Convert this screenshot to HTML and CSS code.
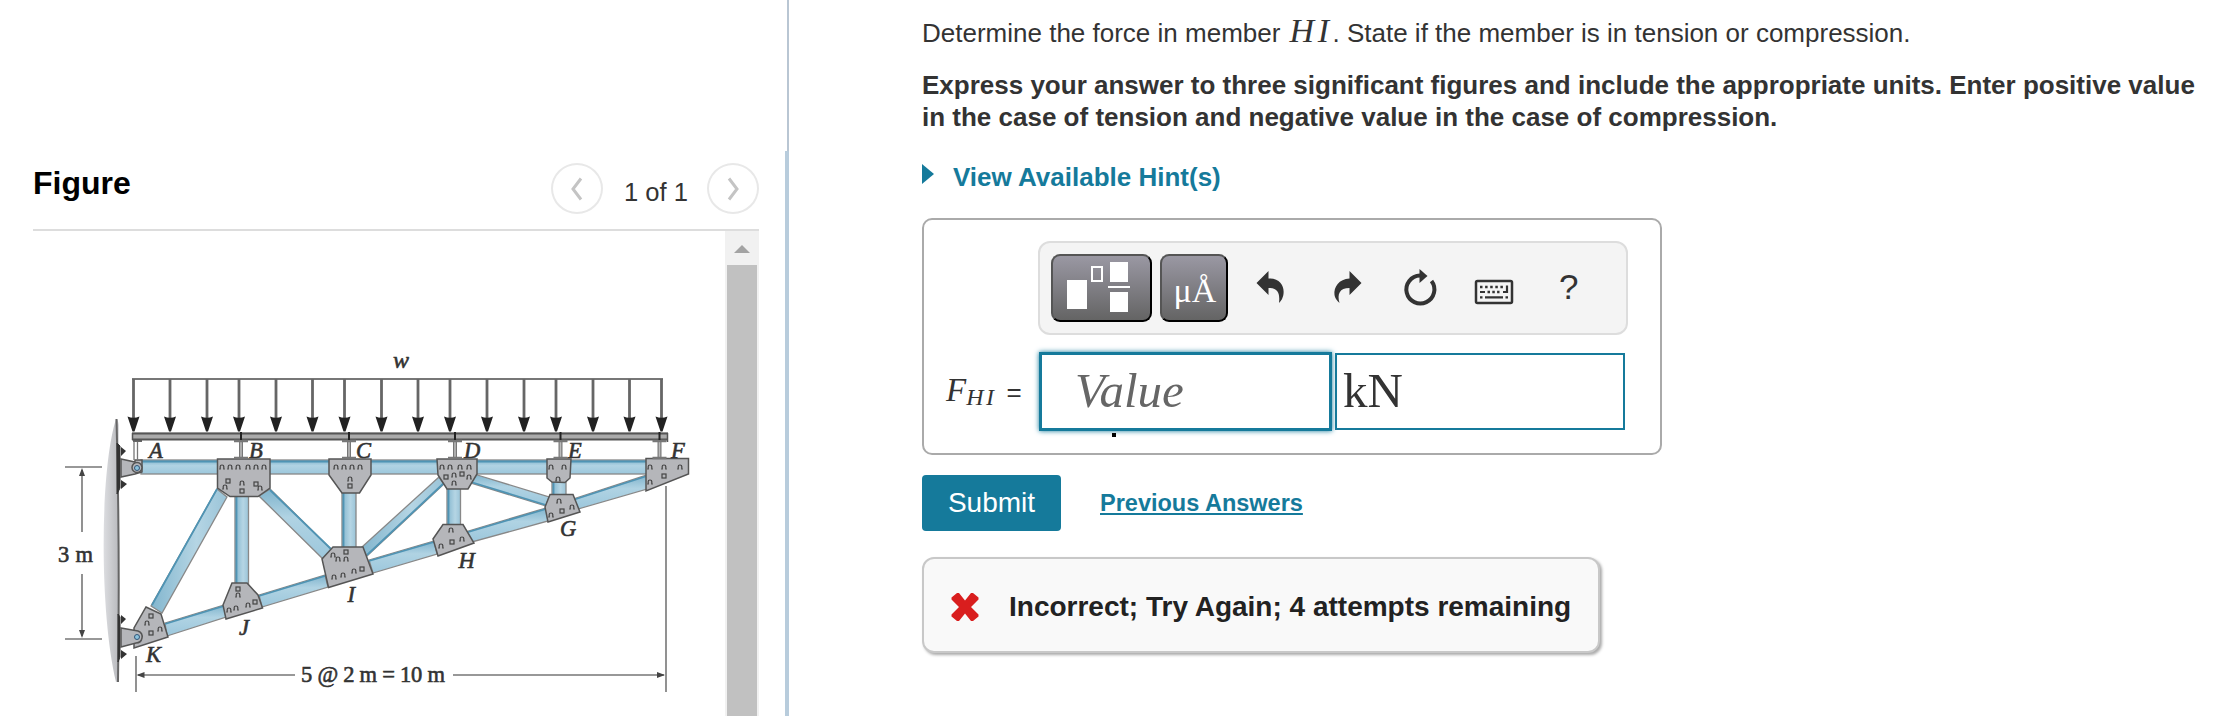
FILE: index.html
```
<!DOCTYPE html>
<html lang="en">

<head>
    <meta charset="UTF-8">
    <meta name="viewport" content="width=device-width, initial-scale=1.0">
    <title>Truss Problem</title>
    <link rel="stylesheet" href="styles.css">
</head>

<body>
    <div class="page">
        <aside class="figure-panel">
            <div class="figure-header">
                <h2>Figure</h2>
                <div class="pager">
                    <button class="pager-btn" aria-label="Previous">
                        <svg width="14" height="24" viewBox="0 0 14 24"><path d="M11 1.500 3 12l8 10.500" /></svg>
                    </button>
                    <span class="pager-text">1 of 1</span>
                    <button class="pager-btn" aria-label="Next">
                        <svg width="14" height="24" viewBox="0 0 14 24"><path d="m3 1.500 8 10.500-8 10.500" /></svg>
                    </button>
                </div>
            </div>
            <div class="figure-body">
                <svg class="truss" width="692" height="485" viewBox="33 231 692 485">
                    <defs>
                        <linearGradient id="steelH" x1="0" y1="0" x2="0" y2="1">
                            <stop offset="0" stop-color="#7fb3cc" />
                            <stop offset=".4" stop-color="#b0d3e3" />
                            <stop offset="1" stop-color="#9cc7dc" />
                        </linearGradient>
                        <linearGradient id="steelV" x1="0" y1="0" x2="1" y2="0">
                            <stop offset="0" stop-color="#83b6ce" />
                            <stop offset=".6" stop-color="#b5d5e4" />
                            <stop offset="1" stop-color="#9ac4d8" />
                        </linearGradient>
                        <linearGradient id="wall" x1="0" y1="0" x2="1" y2="0">
                            <stop offset="0" stop-color="#dcdde0" />
                            <stop offset="1" stop-color="#b9babe" />
                        </linearGradient>
                        <g id="load">
                            <path d="M0 379V420" stroke="#666" stroke-width="2.800" />
                            <path d="M-6 416.500Q0 419 6 416.500L1 431.500h-2z" fill="#222" />
                        </g>
                        <g id="post">
                            <path d="M0 441V458" stroke="#777" stroke-width="4" />
                            <path d="M0 441V458" stroke="#bbb" stroke-width="1.600" />
                            <path d="M-7 441H7M-7 458H7" stroke="#777" stroke-width="2.400" />
                            <path d="M0 432V440" stroke="#222" stroke-width="2" />
                        </g>
                        <path id="hole" d="M-1.800 2V-.5Q-1.800-2 0-2T1.800-.5V2M-2.800 2H-1.200M1.200 2H2.800" fill="none" stroke="#444" stroke-width="1.200" />
                        <rect id="nut" x="-2" y="-2" width="4" height="4" fill="none" stroke="#444" stroke-width="1.200" />
                    </defs>

                    <!-- wall and brackets -->
                    <path d="M116 419C100 470 99 610 116 682Q119 682 118.500 676V425Q118 418 116 419z" fill="url(#wall)" />
                    <path d="M116.500 419Q120 550 118 682" fill="none" stroke="#666" stroke-width="2" />
                    <path d="M117 443l3 3V488l-3 6zM118 614l2 3V657l-2 5z" fill="#333" stroke="#333" />
                    <path d="M121 447l5 4-5 5zM121 480l6 4-6 5zM121 615l5 4-5 5zM121 650l6 4-6 5z" fill="#333" />

                    <!-- members -->
                    <g class="member">
                        <rect x="141" y="460" width="506" height="14" fill="url(#steelH)" />
                        <path d="M151 606 162 613 227 497 217 489z" fill="url(#steelV)" />
                        <rect x="235" y="490" width="13.500" height="96" fill="url(#steelV)" />
                        <path d="M270 489 333 551 324 560 259 496z" fill="url(#steelH)" />
                        <rect x="342" y="490" width="14" height="60" fill="url(#steelV)" />
                        <path d="M362 547 439 477 444 484 367 556z" fill="url(#steelV)" />
                        <path d="M165 623 224 605 226 617 167 636z" fill="url(#steelH)" />
                        <path d="M259 595 325 575 328 587 262 607z" fill="url(#steelH)" />
                        <path d="M369 560 434 541 437 554 373 573z" fill="url(#steelH)" />
                        <path d="M465 532 546 508 548 521 472 542z" fill="url(#steelH)" />
                        <path d="M573 499 647 475 647 489 578 509z" fill="url(#steelH)" />
                        <rect x="447" y="486" width="13.500" height="42" fill="url(#steelV)" />
                        <rect x="552" y="480" width="14" height="16" fill="url(#steelV)" />
                        <path d="M474 474 549 497 546 506 471 483z" fill="url(#steelH)" />
                    </g>
                    <g class="member-edge">
                        <path d="M141 461.500H647M152 605 217 489M236.500 497V584M270 490 332 550M343.500 492V547" />
                        <path d="M165 624 224 606M259 596 325 576M369 561 434 542M465 533 546 509M573 500 647 476" />
                        <path d="M448.500 489V524M553.500 482V494M444 483 367 555M471 482 546 505" />
                    </g>

                    <!-- supports -->
                    <g class="plate">
                        <path d="M121 459 135 462V460H142V472L135 474 121 477z" />
                        <circle cx="137" cy="467.500" r="5" />
                    </g>
                    <path d="M134 440V460M137.500 440V460" stroke="#777" stroke-width="1.300" />
                    <path d="M133 441h9" stroke="#666" stroke-width="2" />

                    <!-- gusset plates -->
                    <g class="plate">
                        <path d="M217.500 459H270V488L258 496.500H230L217.500 488z" />
                        <path d="M329 459H371V475L359.500 493H342L329 475z" />
                        <path d="M437 459H477V474L468 489H447L438 475z" />
                        <path d="M547 459H571L570 478 565 482.500 552 482 547 478z" />
                        <path d="M646 458.500H688.500V474L646 491z" />
                        <path d="M550 494.500H573L580 512 548 522 545 507z" />
                        <path d="M443 524.500H463L474 543 438 556 433 539z" />
                        <path d="M333 547H363L373 574 328.500 587.500 322 559z" />
                        <path d="M232 583H247L258 595 262.500 608 226 619 223 605z" />
                        <path d="M146 607 161 614 168 637 134 648V628z" />
                        <path d="M121 628 138 631Q143 633 142 638T136 643L121 647z" />
                    </g>
                    <circle cx="137" cy="468" r="2.500" fill="#8cc3dc" stroke="#357" />
                    <circle cx="137" cy="637" r="2.500" fill="#8cc3dc" stroke="#357" />

                    <!-- bolts -->
                    <g>
                        <use href="#hole" x="222" y="467" /><use href="#hole" x="230" y="467" /><use href="#hole" x="238" y="467" />
                        <use href="#hole" x="248" y="467" /><use href="#hole" x="256" y="467" /><use href="#hole" x="264" y="467" />
                        <use href="#nut" x="228" y="481" /><use href="#hole" x="225" y="487" /><use href="#hole" x="242" y="483" />
                        <use href="#nut" x="242" y="491" /><use href="#nut" x="256" y="484" /><use href="#hole" x="260" y="488" />
                        <use href="#hole" x="336" y="467" /><use href="#hole" x="344" y="467" /><use href="#hole" x="352" y="467" /><use href="#hole" x="360" y="467" />
                        <use href="#hole" x="350" y="479" /><use href="#nut" x="350" y="486" />
                        <use href="#hole" x="442" y="467" /><use href="#hole" x="450" y="467" /><use href="#hole" x="460" y="467" /><use href="#hole" x="469" y="467" />
                        <use href="#nut" x="446" y="477" /><use href="#hole" x="454" y="475" /><use href="#nut" x="462" y="474" /><use href="#hole" x="469" y="477" /><use href="#hole" x="454" y="483" />
                        <use href="#hole" x="551" y="467" /><use href="#hole" x="564" y="467" /><use href="#hole" x="558" y="479" />
                        <use href="#hole" x="650" y="467" /><use href="#hole" x="664" y="467" /><use href="#hole" x="680" y="467" /><use href="#nut" x="664" y="476" /><use href="#hole" x="650" y="482" />
                        <use href="#hole" x="559" y="501" /><use href="#hole" x="572" y="507" /><use href="#nut" x="562" y="511" /><use href="#hole" x="551" y="515" />
                        <use href="#hole" x="451" y="530" /><use href="#hole" x="462" y="539" /><use href="#nut" x="452" y="542" /><use href="#hole" x="441" y="546" />
                        <use href="#nut" x="346" y="552" /><use href="#hole" x="346" y="559" /><use href="#hole" x="338" y="559" /><use href="#hole" x="333" y="555" />
                        <use href="#hole" x="334" y="577" /><use href="#hole" x="343" y="575" /><use href="#hole" x="354" y="571" /><use href="#nut" x="362" y="569" />
                        <use href="#nut" x="238" y="589" /><use href="#hole" x="238" y="595" /><use href="#hole" x="229" y="610" /><use href="#hole" x="236" y="608" />
                        <use href="#hole" x="248" y="605" /><use href="#nut" x="255" y="602" />
                        <use href="#nut" x="151" y="616" /><use href="#hole" x="147" y="623" /><use href="#nut" x="151" y="633" /><use href="#hole" x="160" y="629" />
                    </g>

                    <!-- deck -->
                    <rect x="132" y="432.500" width="536" height="7.500" fill="#aaa" />
                    <path d="M132 433.500H668M132 439.500H668" stroke="#555" stroke-width="2.200" />
                    <path d="M132.500 433v7M667.500 433v9" stroke="#555" stroke-width="1.500" />
                    <use href="#post" x="241" /><use href="#post" x="349" /><use href="#post" x="455" />
                    <use href="#post" x="560.500" /><use href="#post" x="659.500" />

                    <!-- distributed load -->
                    <path d="M132 379H663" stroke="#777" stroke-width="1.800" />
                    <use href="#load" x="133.500" /><use href="#load" x="170" /><use href="#load" x="207" /><use href="#load" x="239" />
                    <use href="#load" x="276" /><use href="#load" x="312.500" /><use href="#load" x="344.500" /><use href="#load" x="381.500" />
                    <use href="#load" x="418" /><use href="#load" x="450" /><use href="#load" x="487" /><use href="#load" x="524" />
                    <use href="#load" x="556" /><use href="#load" x="593" /><use href="#load" x="629.500" /><use href="#load" x="661.500" />

                    <!-- dimensions -->
                    <g class="dim">
                        <path d="M65 467H102M65 639H102M82 470V532M82 574V636M136 656V692M666 486V692M138 675H295M453 675H664" />
                    </g>
                    <path d="M82 468l3 8h-6zM82 638l3-8h-6zM136.500 675l8-3v6zM665 675l-8-3v6z" fill="#444" />

                    <g class="labels">
                        <text x="149" y="457.500">A</text>
                        <text x="249" y="457.500">B</text>
                        <text x="356" y="457.500">C</text>
                        <text x="464" y="457.500">D</text>
                        <text x="568" y="457.500">E</text>
                        <text x="671" y="457.500">F</text>
                        <text x="560" y="535.500">G</text>
                        <text x="458.500" y="568">H</text>
                        <text x="347.500" y="602">I</text>
                        <text x="239" y="635">J</text>
                        <text x="146" y="662">K</text>
                        <text x="393" y="367.500" class="load-label">w</text>
                    </g>
                    <g class="dim-text">
                        <text x="58" y="562" textLength="35">3 m</text>
                        <text x="301" y="682" textLength="144">5 @ 2 m = 10 m</text>
                    </g>
                </svg>
                <div class="scrollbar">
                    <div class="scroll-up"></div>
                    <div class="scroll-thumb"></div>
                </div>
            </div>
        </aside>
        <div class="divider">
            <div class="divider-top"></div>
            <div class="divider-bottom"></div>
        </div>

        <main class="problem">
            <p class="question">Determine the force in member <i class="math">HI</i>. State if the member is in tension or compression.</p>
            <p class="instructions">Express your answer to three significant figures and include the appropriate units. Enter positive value<br>in the case of tension and negative value in the case of compression.</p>
            <a class="hints"><span class="hint-arrow"></span><span>View Available Hint(s)</span></a>

            <div class="answer-box">
                <div class="toolbar">
                    <button class="tool-dark templates" aria-label="Templates">
                        <svg width="97" height="64" viewBox="0 0 97 64">
                            <path d="M14 24h20v29H14zM57 6h18v20H57zM57 36h18v20H57zM55 30h22v2H55z" fill="#fff" />
                            <rect x="39" y="11" width="10" height="14" fill="none" stroke="#fff" stroke-width="2" />
                        </svg>
                    </button>
                    <button class="tool-dark symbols">μÅ</button>
                    <svg class="tools" width="340" height="50" viewBox="1250 264 340 50">
                        <path d="M1256.500 284 1268.500 272V279.500C1280 279 1284.500 287 1283.500 295Q1283 300 1279 304C1280 295 1278.500 289 1268.500 289V296z" fill="#333" />
                        <path d="M1361.500 284 1349.500 272V279.500C1339 280 1333.500 288 1334.500 296Q1335 300 1339.500 304C1337 295 1339.500 289 1349.500 289V296z" fill="#333" />
                        <path d="M1431.500 282A14 14 0 1 1 1420 276.500" fill="none" stroke="#333" stroke-width="4" />
                        <path d="M1419.500 270 1427.500 277 1419.500 284z" fill="#333" />
                        <rect x="1476" y="282" width="36" height="22" rx="1.500" fill="none" stroke="#333" stroke-width="2.500" />
                        <path d="M1480 288h23" stroke="#333" stroke-width="2.300" stroke-dasharray="2.500 2.600" />
                        <path d="M1487.500 293h12" stroke="#333" stroke-width="2.300" stroke-dasharray="2.500 2.300" />
                        <path d="M1480 293h5M1503 293h5M1507 286.500v7.500M1480 298.300h2.500M1485 298.300h18M1505.500 298.300h2.500" stroke="#333" stroke-width="2.200" />
                        <text x="1559" y="300" class="help">?</text>
                    </svg>
                </div>
                <div class="answer-row">
                    <div class="answer-label"><i class="var">F</i><i class="sub">HI</i><span class="equals">=</span></div>
                    <div class="value-field">Value</div>
                    <div class="unit-field">kN</div>
                </div>
            </div>

            <div class="actions">
                <button class="submit">Submit</button>
                <a class="previous">Previous Answers</a>
            </div>

            <div class="feedback">
                <svg width="28" height="28" viewBox="0 0 28 28">
                    <path d="M6 0h2L14 7.500 20 0h2l5.500 4.500v2L20 14l7.500 7.500v2L22 28h-2l-6-7.500L8 28H6L.5 23.500v-2L8 14 .5 6.500v-2z" fill="#d91e1e" />
                </svg>
                <span>Incorrect; Try Again; 4 attempts remaining</span>
            </div>
        </main>
    </div>
</body>

</html>
```
FILE: styles.css
```
* {
    box-sizing: border-box;
}

body {
    font-family: "Liberation Sans", Arial, sans-serif;
    margin: 0;
    background: #fff;
    color: #333;
    overflow: hidden;
}

button {
    padding: 0;
    font-family: inherit;
}

.page {
    display: flex;
    height: 716px;
}

/* Figure panel */
.figure-panel {
    width: 785px;
    padding: 151px 26px 0 33px;
    flex: none;
}

.figure-header {
    display: flex;
    justify-content: space-between;
    height: 80px;
    border-bottom: 2px solid #ddd;
}

h2 {
    margin: 13px 0 0;
    font-size: 32px;
    line-height: 38px;
    color: #000;
}

.pager {
    display: flex;
    gap: 20px;
    padding-top: 12px;
}

.pager-btn {
    display: flex;
    align-items: center;
    justify-content: center;
    width: 52px;
    height: 51px;
    border: 2px solid #e8e8e8;
    border-radius: 50%;
    background: #fff;
}

.pager-btn path {
    fill: none;
    stroke: #c4c4c4;
    stroke-width: 3;
}

.pager-text {
    width: 64px;
    padding: 14px 0 0 1px;
    font-size: 25.6px;
    line-height: 30px;
    white-space: nowrap;
}

.figure-body {
    display: flex;
    height: 485px;
}

.member {
    stroke: #888;
    stroke-width: 1.3;
}

.member-edge {
    fill: none;
    stroke: #4f94b4;
    stroke-width: 1.8;
}

.plate {
    fill: #b5b6ba;
    stroke: #555;
    stroke-width: 1.5;
}

.dim {
    fill: none;
    stroke: #777;
    stroke-width: 1.6;
}

.labels,
.dim-text {
    font-family: "Liberation Serif", serif;
    font-size: 22.5px;
    fill: #333;
    stroke: #333;
    stroke-width: 0.6;
}

.labels {
    font-style: italic;
}

.load-label {
    font-size: 24px;
}

.scrollbar {
    display: flex;
    flex-direction: column;
    align-items: center;
    width: 34px;
    background: #f1f1f1;
}

.scroll-up {
    margin: 14px 0 12px;
    border: 8px solid transparent;
    border-top: 0;
    border-bottom-color: #a3a3a3;
}

.scroll-thumb {
    flex: 1;
    width: 30px;
    background: #c1c1c1;
}

.divider {
    display: flex;
    flex-direction: column;
    align-items: flex-end;
    width: 4px;
}

.divider-top {
    width: 2px;
    height: 151px;
    background: #b9c6d3;
}

.divider-bottom {
    flex: 1;
    width: 4px;
    background: #b8ccdc;
}

/* Problem panel */
.problem {
    flex: 1;
    padding: 14px 0 0 133px;
    font-size: 26px;
    white-space: nowrap;
}

p {
    margin: 0;
}

.question {
    height: 55px;
    line-height: 38px;
}

.math {
    margin-left: 2px;
    font-family: "Liberation Serif", serif;
    font-size: 34px;
    letter-spacing: 3.5px;
    line-height: 1;
}

.instructions {
    height: 80px;
    font-weight: bold;
    line-height: 32px;
}

.hints {
    display: flex;
    height: 69px;
    padding-top: 13px;
    color: #157a9b;
    font-weight: bold;
    line-height: 30px;
}

.hint-arrow {
    height: 20px;
    margin: 2px 19px 0 0;
    border: 10px solid transparent;
    border-left: 12px solid #157a9b;
    border-right: 0;
}

.answer-box {
    width: 740px;
    height: 237px;
    padding: 21px 0 0;
    border: 2px solid #aaa;
    border-radius: 10px;
}

.toolbar {
    display: flex;
    align-items: center;
    width: 590px;
    height: 94px;
    margin-left: 114px;
    padding-left: 11px;
    border: 2px solid #ddd;
    border-radius: 12px;
    background: #f4f4f4;
}

.tool-dark {
    height: 68px;
    border: 2px solid;
    border-color: #555 #000 #000 #555;
    border-radius: 9px;
    background: linear-gradient(#9a98a3, #646464);
    color: #fff;
}

.templates {
    width: 101px;
    margin-right: 8px;
}

.symbols {
    width: 68px;
    padding: 6px 0 0 2px;
    font-family: "Liberation Serif", serif;
    font-size: 34px;
}

.tools {
    margin-left: 22px;
}

.help {
    font-size: 35px;
    fill: #333;
}

.answer-row {
    display: flex;
    height: 79px;
    margin-top: 17px;
}

.answer-label {
    display: flex;
    align-items: baseline;
    width: 115px;
    padding: 20px 0 0 22px;
    font-family: "Liberation Serif", serif;
}

.var {
    font-size: 33px;
}

.sub {
    position: relative;
    top: 4px;
    font-size: 24px;
    letter-spacing: 2.5px;
}

.equals {
    margin-left: 10px;
    font-family: "Liberation Sans", sans-serif;
    font-size: 26px;
}

.value-field,
.unit-field {
    font-family: "Liberation Serif", serif;
    font-size: 49px;
    line-height: 72px;
}

.value-field {
    position: relative;
    width: 293px;
    margin-right: 3px;
    padding-left: 33px;
    border: 3px solid #157a9b;
    box-shadow: 0 0 5px #157a9b;
    color: #666;
    font-style: italic;
}

/* caret mark under the value field */
.value-field::after {
    content: "";
    position: absolute;
    left: 70px;
    top: 78px;
    width: 4px;
    height: 4px;
    background: #000;
}

.unit-field {
    width: 290px;
    height: 77px;
    margin-top: 1px;
    padding-left: 6px;
    border: 2px solid #157a9b;
}

.actions {
    display: flex;
    align-items: center;
    height: 56px;
    margin-top: 20px;
}

.submit {
    width: 139px;
    height: 56px;
    border: 0;
    border-radius: 4px;
    background: #157a9b;
    color: #fff;
    font-size: 28px;
}

.previous {
    margin-left: 39px;
    color: #157a9b;
    font-size: 23.5px;
    font-weight: bold;
    text-decoration: underline;
    text-decoration-thickness: 2px;
    text-underline-offset: 2px;
}

.feedback {
    display: flex;
    align-items: center;
    gap: 30px;
    width: 678px;
    height: 96px;
    margin-top: 26px;
    padding: 3px 0 0 27px;
    border: 2px solid #c8c8c8;
    border-radius: 12px;
    box-shadow: 2px 2px 3px #aaa;
    background: #f9f9f9;
    color: #222;
    font-size: 28px;
    font-weight: bold;
}
```
